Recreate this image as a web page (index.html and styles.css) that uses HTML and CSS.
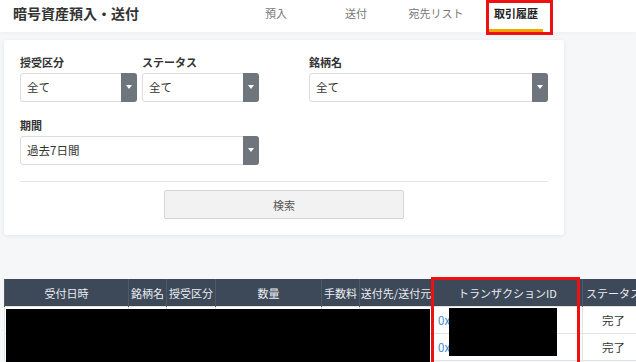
FILE: index.html
```html
<!DOCTYPE html>
<html lang="ja">
<head>
    <meta charset="UTF-8">
    <meta name="viewport" content="width=device-width, initial-scale=1.0">
    <title>暗号資産預入・送付</title>
    <link rel="stylesheet" href="styles.css">
</head>
<body>
    <header class="topbar">
        <h1 class="page-title">暗号資産預入・送付</h1>
        <nav class="tabs">
            <a class="tab">預入</a>
            <a class="tab">送付</a>
            <a class="tab">宛先リスト</a>
            <a class="tab active"><span>取引履歴</span><i class="highlight highlight-tab"></i></a>
        </nav>
    </header>

    <main class="content">
        <section class="filter-card">
            <div class="filter-grid">
                <div class="pair">
                    <div class="field">
                        <label>授受区分</label>
                        <div class="select"><span>全て</span><i class="caret"></i></div>
                    </div>
                    <div class="field">
                        <label>ステータス</label>
                        <div class="select"><span>全て</span><i class="caret"></i></div>
                    </div>
                </div>
                <div class="field">
                    <label>銘柄名</label>
                    <div class="select"><span>全て</span><i class="caret"></i></div>
                </div>
                <div class="field">
                    <label>期間</label>
                    <div class="select"><span>過去7日間</span><i class="caret"></i></div>
                </div>
            </div>
            <hr class="divider">
            <div class="actions">
                <button type="button">検索</button>
            </div>
        </section>

        <div class="table-wrap">
            <table class="history">
                <colgroup>
                    <col style="width: 124px">
                    <col style="width: 38px">
                    <col style="width: 49px">
                    <col style="width: 106px">
                    <col style="width: 38px">
                    <col style="width: 73px">
                    <col style="width: 150px">
                    <col style="width: 62px">
                    <col style="width: 80px">
                </colgroup>
                <thead>
                    <tr>
                        <th>受付日時</th>
                        <th>銘柄名</th>
                        <th>授受区分</th>
                        <th>数量</th>
                        <th>手数料</th>
                        <th>送付先/送付元</th>
                        <th>トランザクションID</th>
                        <th>ステータス</th>
                        <th></th>
                    </tr>
                </thead>
                <tbody>
                    <tr>
                        <td></td><td></td><td></td><td></td><td></td><td></td>
                        <td class="tx"><a>0x</a></td>
                        <td>完了</td>
                        <td></td>
                    </tr>
                    <tr>
                        <td></td><td></td><td></td><td></td><td></td><td></td>
                        <td class="tx"><a>0x</a></td>
                        <td>完了</td>
                        <td></td>
                    </tr>
                </tbody>
            </table>
            <div class="redact redact-rows"></div>
            <div class="redact redact-tx"></div>
            <div class="highlight highlight-col"></div>
        </div>
    </main>
</body>
</html>
```

FILE: styles.css
```css
html, body {
    height: 100%;
    overflow: hidden;
}
body {
    margin: 0;
    font-family: "Noto Sans CJK JP", "Noto Sans", Arial, sans-serif;
    background-color: #f6f7f9;
    color: #333;
}
.topbar {
    display: flex;
    height: 32px;
    background-color: white;
    box-shadow: 0 1px 4px rgba(0,0,0,0.04);
    position: relative;
    z-index: 1;
}
.page-title {
    flex: 0 0 223px;
    margin: 0;
    padding-left: 13px;
    font-size: 14px;
    line-height: 26px;
    font-weight: bold;
    color: #333;
}
.tabs {
    display: flex;
}
.tab {
    position: relative;
    width: 80px;
    padding-top: 5px;
    text-align: center;
    font-size: 11px;
    line-height: 16px;
    color: #777;
}
.tab.active {
    color: #222;
    font-weight: bold;
}
.tab.active span {
    display: inline-block;
    padding: 0 5px 8px;
    border-bottom: 3px solid #f5a300;
}
.highlight {
    position: absolute;
    border: 3px solid #ee1111;
    box-sizing: border-box;
    z-index: 2;
}
.highlight-tab {
    left: 10px;
    top: 0;
    width: 67px;
    height: 35px;
}
.content {
    padding: 8px 4px;
}
.filter-card {
    width: 560px;
    box-sizing: border-box;
    padding: 15px 16px 16px;
    background-color: white;
    border-radius: 3px;
    box-shadow: 0 1px 4px rgba(0,0,0,0.08);
}
.filter-grid {
    display: grid;
    grid-template-columns: 239px 239px;
    column-gap: 50px;
    row-gap: 16px;
}
.pair {
    display: grid;
    grid-template-columns: 117px 117px;
    column-gap: 5px;
}
.field label {
    display: block;
    font-size: 11px;
    line-height: 15px;
    font-weight: bold;
    color: #333;
    margin-bottom: 3px;
}
.select {
    display: flex;
    height: 29px;
    box-sizing: border-box;
    border: 1px solid #dcdcdc;
    border-radius: 3px;
    background-color: white;
}
.select span {
    flex: 1;
    padding-left: 6px;
    font-size: 11.5px;
    line-height: 27px;
    color: #333;
}
.caret {
    position: relative;
    width: 16px;
    margin: -1px -1px -1px 0;
    background-color: #6e757c;
    border-radius: 0 3px 3px 0;
}
.caret::after {
    content: "";
    position: absolute;
    left: 5px;
    top: 12px;
    border-left: 3px solid transparent;
    border-right: 3px solid transparent;
    border-top: 4px solid white;
}
.divider {
    margin: 16px 0 0;
    border: none;
    border-top: 1px solid #e6e6e6;
}
.actions {
    text-align: center;
    margin-top: 8px;
}
.actions button {
    width: 240px;
    height: 29px;
    background-color: #f2f2f2;
    border: 1px solid #d6d6d6;
    border-radius: 2px;
    font-family: inherit;
    font-size: 11px;
    color: #555;
}
.table-wrap {
    position: relative;
    margin-top: 44px;
    width: 720px;
}
.history {
    table-layout: fixed;
    width: 720px;
    border-collapse: collapse;
    font-size: 11px;
}
.history th {
    height: 27px;
    padding: 0;
    background-color: #3d4858;
    color: #e9edf2;
    font-weight: normal;
    border-left: 1px solid #4f5a69;
    text-align: center;
    white-space: nowrap;
    overflow: hidden;
}
.history td {
    height: 26px;
    padding: 0;
    background-color: white;
    border: 1px solid #e3e3e3;
    text-align: center;
    font-size: 11.5px;
    color: #333;
}
.history td.tx {
    text-align: left;
    padding-left: 5px;
}
.history td.tx a {
    color: #3a8ad0;
}
.redact {
    position: absolute;
    background-color: black;
}
.redact-rows {
    left: 2px;
    top: 30px;
    width: 424px;
    height: 60px;
}
.redact-tx {
    left: 445px;
    top: 29px;
    width: 108px;
    height: 48px;
}
.highlight-col {
    left: 427px;
    top: -2px;
    width: 149px;
    height: 92px;
}
```
